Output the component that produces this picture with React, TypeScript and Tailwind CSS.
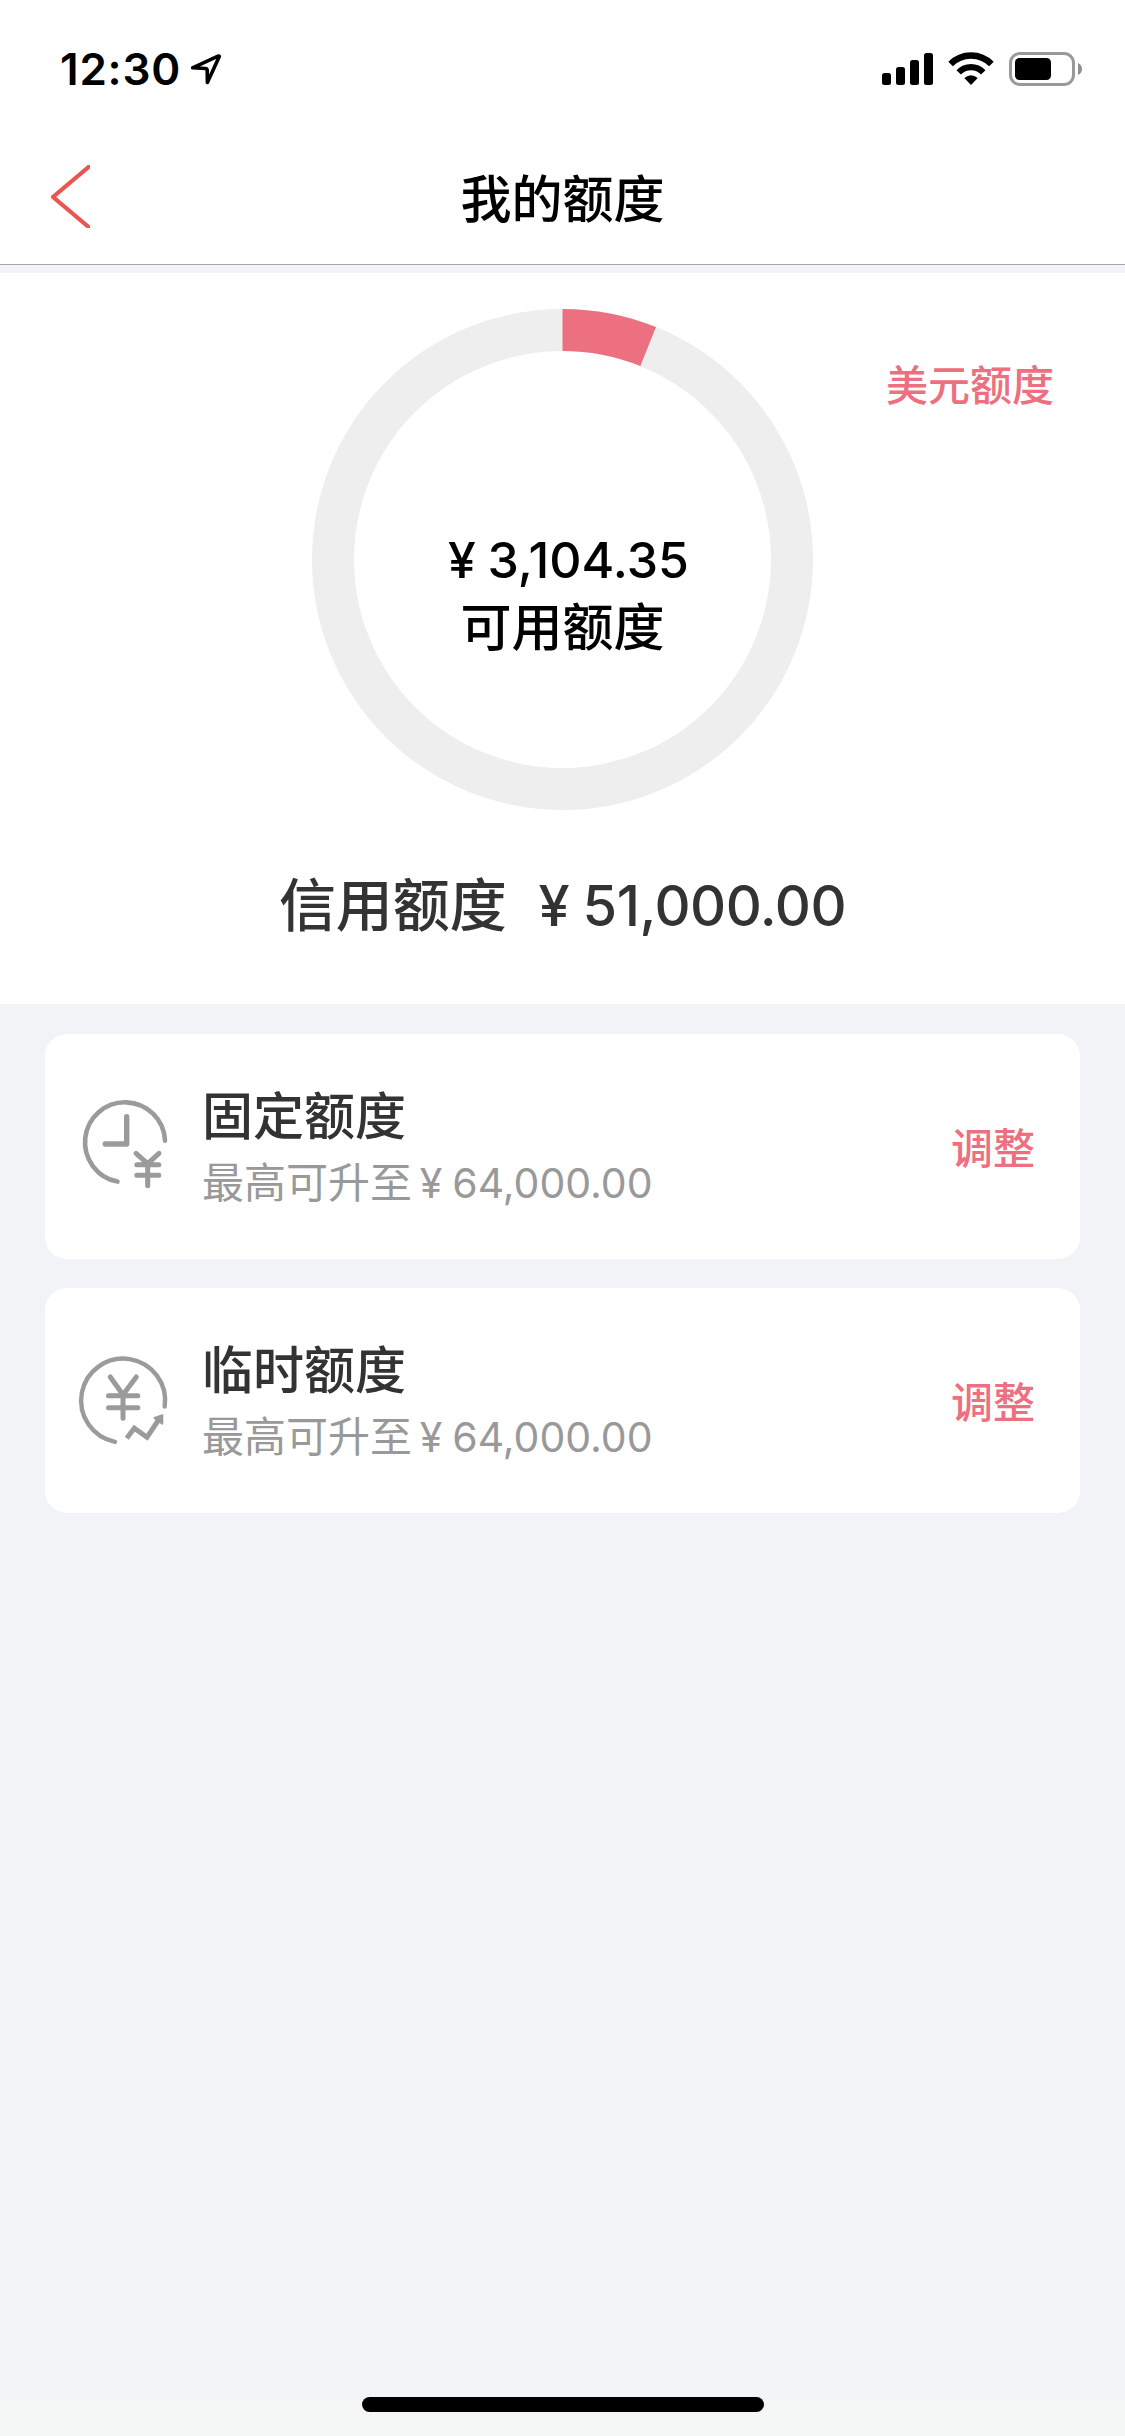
import type { ReactNode } from "react";

const CREDIT_LIMIT = 51000;
const AVAILABLE = 3104.35;

function StatusBar() {
  return (
    <div className="flex h-[132px] items-start justify-between pl-[60px] pr-[43px] pt-[46px]">
      <div className="flex items-center">
        <span className="w-[131px] text-[44px] font-semibold leading-[46px] tracking-[0.8px]">12:30</span>
        <svg className="h-8 w-8" viewBox="0 0 32 32" fill="none">
          <path
            d="M1.6 14.8 27 3.2Q28.6 2.8 28.2 3.8L16.4 29.4 16.2 17.4Q16.2 15.6 14.4 15.5Z"
            stroke="currentColor"
            strokeWidth={3.6}
            strokeLinejoin="round"
          />
        </svg>
      </div>
      <div className="flex items-center pt-[6px]">
        <svg className="h-[34px] w-[51px]" viewBox="0 0 51 34">
          <rect x="0" y="21" width="9" height="12" rx="2.5" />
          <rect x="14" y="15" width="9" height="18" rx="2.5" />
          <rect x="28" y="8" width="9" height="25" rx="2.5" />
          <rect x="42" y="1" width="9" height="32" rx="2.5" />
        </svg>
        <svg className="ml-[15px] h-[34px] w-[46px]" viewBox="0 0 46 34" fill="none">
          <path d="M2.6 12.1A28.6 28.6 0 0 1 43.4 12.1" stroke="currentColor" strokeWidth={6.4} />
          <path d="M10.7 20.4A17.2 17.2 0 0 1 35.3 20.4" stroke="currentColor" strokeWidth={6.2} />
          <path d="M16.3 26Q23 20.4 29.7 26L23 33Z" fill="currentColor" />
        </svg>
        <svg className="ml-[15px] h-[34px] w-[73px]" viewBox="0 0 73 34">
          <rect x="1.5" y="1.5" width="63" height="31" rx="9.5" fill="none" stroke="#999" strokeWidth={3} />
          <rect x="6" y="6" width="36" height="22" rx="4.5" />
          <path d="M69 11Q73 13 73 17T69 23Z" fill="#8e8e8e" />
        </svg>
      </div>
    </div>
  );
}

function NavBar() {
  return (
    <header className="grid h-[133px] grid-cols-[1fr_auto_1fr] items-center border-b border-[#a9a9ac]">
      <svg className="mb-[3px] ml-[51px] h-[63px] w-[39px]" viewBox="0 0 39 63" fill="none">
        <path d="M40 0 2 32l38 32" stroke="#eb5550" strokeWidth={4.2} />
      </svg>
      <h1 className="pt-1 text-[51px] font-medium leading-[60px]">我的额度</h1>
      <span />
    </header>
  );
}

// The yen sign takes one full-width cell, as in CJK text
function Yen() {
  return <span className="inline-block w-[1.03em] text-center">¥</span>;
}

function LimitRing() {
  const radius = 229.5;
  const length = 2 * Math.PI * radius;
  const used = (AVAILABLE / CREDIT_LIMIT) * length;

  return (
    <div className="grid h-[501px] w-[501px]">
      <svg className="col-start-1 row-start-1 -rotate-90" viewBox="0 0 501 501" fill="none">
        <circle cx="250.5" cy="250.5" r={radius} stroke="#eee" strokeWidth={42} />
        <circle
          cx="250.5"
          cy="250.5"
          r={radius}
          stroke="#ed7080"
          strokeWidth={42}
          strokeDasharray={`${used} ${length}`}
        />
      </svg>
      <div className="col-start-1 row-start-1 flex flex-col items-center pt-[218px] font-medium">
        <p className="text-[50px] leading-[66px]">
          <Yen />
          3,104.35
        </p>
        <p className="pt-[2px] text-[51px] leading-[66px]">可用额度</p>
      </div>
    </div>
  );
}

function ClockYenIcon() {
  return (
    <svg
      className="h-[99px] w-[99px] text-[#9b9b9b]"
      viewBox="0 0 99 99"
      fill="none"
      stroke="currentColor"
      strokeWidth={4.6}
      strokeLinecap="round"
    >
      <path d="M90 43.7A40 40 0 1 0 42.5 84.6" />
      <path d="M51.7 19.7V47H30.3" strokeWidth={5.4} strokeLinejoin="round" />
      <path d="m61 56.3 11.7 10.4L84 56.3M72.7 66.5v22.3M61.8 67.7h22M61.8 78.3h22" strokeWidth={5} />
    </svg>
  );
}

function YenTrendIcon() {
  return (
    <svg
      className="h-[99px] w-[99px] text-[#9b9b9b]"
      viewBox="0 0 99 99"
      fill="none"
      stroke="currentColor"
      strokeWidth={4.4}
      strokeLinecap="round"
    >
      <path d="M89.7 55.5A42 42 0 1 0 40 90.8" />
      <path d="M35.3 26 48 43.7 61.3 26M48 43.7v23.5M33.5 44.7h29.3M33.5 56.7h29.3" strokeWidth={5} />
      <path d="m51.7 87.3 7.6-10.1L72 86.3 83.5 69" strokeLinecap="butt" strokeWidth={5} />
      <path d="M87.3 64.3 79.5 67l7.8 5.6Z" fill="currentColor" strokeWidth={2} strokeLinejoin="round" />
    </svg>
  );
}

interface LimitCardProps {
  icon: ReactNode;
  title: string;
  max: string;
}

function LimitCard({ icon, title, max }: LimitCardProps) {
  return (
    <section className="flex h-[225px] items-center rounded-[22px] bg-white pl-[30px] pr-[45px]">
      {icon}
      <div className="ml-[28px] flex-1 pt-[6px]">
        <h2 className="text-[51px] font-medium leading-[66px] text-[#333]">{title}</h2>
        <p className="text-[42px] leading-[65px] text-[#999]">
          最高可升至
          <span className="-ml-[2px] text-[41px]">
            <Yen />
            {max}
          </span>
        </p>
      </div>
      <button className="pt-[5px] text-[42px] font-medium leading-[60px] text-[#ed7080]">调整</button>
    </section>
  );
}

export default function App() {
  return (
    <div className="flex h-[2436px] w-[1125px] flex-col bg-[#f1f3f7] font-['Inter','Noto_Sans_CJK_SC',sans-serif] text-black">
      <div className="bg-white">
        <StatusBar />
        <NavBar />
      </div>

      <main className="mt-2 flex-1">
        <div className="relative flex h-[731px] flex-col items-center bg-white pt-9">
          <LimitRing />
          <button className="absolute right-[71px] top-[83px] text-[42px] font-medium leading-[60px] text-[#ed7080]">
            美元额度
          </button>
          <p className="mt-[60px] flex items-baseline text-[57px] font-medium leading-[72px] text-[#333]">
            信用额度
            <span className="ml-[18px] text-[56px] tracking-[-0.5px]">
              <Yen />
              51,000.00
            </span>
          </p>
        </div>

        <div className="flex flex-col gap-[29px] px-[45px] pt-[30px]">
          <LimitCard icon={<ClockYenIcon />} title="固定额度" max="64,000.00" />
          <LimitCard icon={<YenTrendIcon />} title="临时额度" max="64,000.00" />
        </div>
      </main>

      <footer className="flex h-9 justify-center bg-[#f5f7f6]">
        <div className="-mt-[3px] h-[15px] w-[402px] rounded-full bg-black" />
      </footer>
    </div>
  );
}
